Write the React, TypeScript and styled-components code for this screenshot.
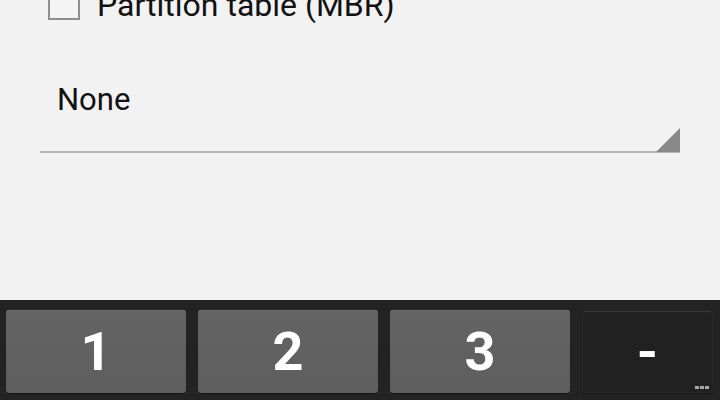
import React from "react";
import styled, { createGlobalStyle } from "styled-components";

const Global = createGlobalStyle`
  html, body { margin: 0; padding: 0; }
  body { width: 720px; height: 400px; overflow: hidden; font-family: Roboto, "Noto Sans", sans-serif; }
`;

const Screen = styled.div`
  width: 720px;
  height: 400px;
  display: flex;
  flex-direction: column;
  overflow: hidden;
`;

const Content = styled.div`
  height: 300px;
  background: #f2f2f2;
  display: flex;
  flex-direction: column;
  overflow: hidden;
`;

const CheckRow = styled.label`
  display: flex;
  align-items: center;
  gap: 17px;
  margin-top: -16px;
  padding-left: 48px;
  height: 40px;
`;

const Box = styled.span`
  width: 28px;
  height: 28px;
  border: 2px solid #8e8e8e;
  background: #f4f4f4;
  box-sizing: content-box;
`;

const CheckText = styled.span`
  font-size: 32px;
  color: #111;
  margin-top: 2px;
`;

const Spinner = styled.div`
  position: relative;
  margin: 44px 40px 0;
  height: 70px;
  padding: 13px 0 0 17px;
  border-bottom: 2px solid #b4b4b4;
  box-sizing: content-box;
  display: flex;
  align-items: flex-start;
  &::after {
    content: "";
    position: absolute;
    right: 0;
    bottom: -1px;
    width: 0;
    height: 0;
    border-left: 24px solid transparent;
    border-bottom: 24px solid #888;
  }
`;

const SpinnerText = styled.span`
  font-size: 31px;
  color: #111;
`;

const Keyboard = styled.div`
  height: 100px;
  background: #232323;
  display: grid;
  grid-template-columns: 180px 180px 180px 131px;
  column-gap: 12px;
  padding: 10px 0 7px 6px;
  box-sizing: border-box;
`;

const Key = styled.div<{ $dark?: boolean }>`
  position: relative;
  border-radius: 3px;
  background: ${(p) => (p.$dark ? "#212121" : "linear-gradient(#646464, #5e5e5e)")};
  box-shadow: inset 0 1px 0 ${(p) => (p.$dark ? "#363636" : "#6f6f6f")},
    0 1px 1px rgba(0,0,0,0.35);
  border: ${(p) => (p.$dark ? "1px solid #2a2a2a" : "none")};
  box-sizing: border-box;
  display: flex;
  align-items: center;
  justify-content: center;
  color: #fff;
  font-family: Roboto, "Noto Sans", sans-serif;
  font-weight: 700;
  font-size: 54px;
  line-height: 1;
`;

const Dots = styled.span`
  position: absolute;
  right: 3px;
  bottom: 3px;
  display: flex;
  gap: 1px;
  & > i {
    width: 4px;
    height: 3px;
    background: #a8a8a8;
  }
`;

export default function App() {
  return (
    <>
      <Global />
      <Screen>
        <Content>
          <CheckRow>
            <Box />
            <CheckText>Partition table (MBR)</CheckText>
          </CheckRow>
          <Spinner>
            <SpinnerText>None</SpinnerText>
          </Spinner>
        </Content>
        <Keyboard>
          <Key>1</Key>
          <Key>2</Key>
          <Key>3</Key>
          <Key $dark>
            -
            <Dots>
              <i />
              <i />
              <i />
            </Dots>
          </Key>
        </Keyboard>
      </Screen>
    </>
  );
}
